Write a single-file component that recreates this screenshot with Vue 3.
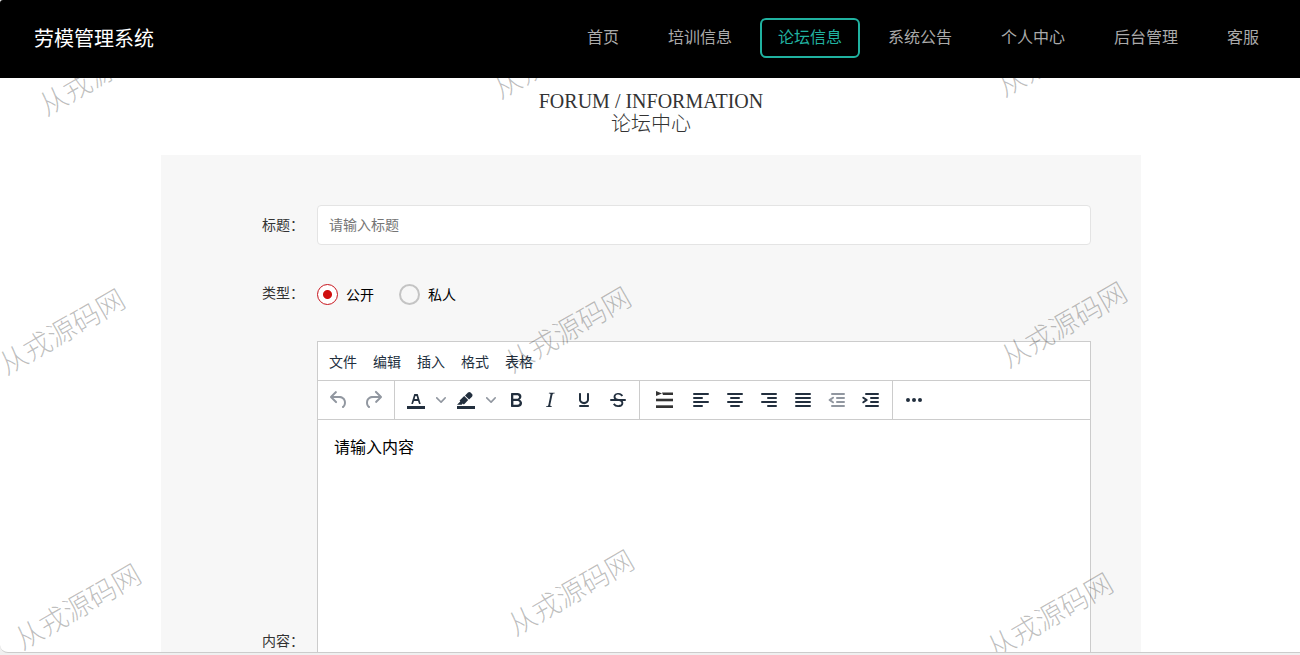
<script setup>
import { ref } from 'vue'

const navItems = ['首页', '培训信息', '论坛信息', '系统公告', '个人中心', '后台管理', '客服']
const active = ref('论坛信息')
const title = ref('')
const kind = ref('公开')
const content = ref('请输入内容')
const menus = ['文件', '编辑', '插入', '格式', '表格']

const bar = 'M3 18h18v3H3z'
const groups = [
  [
    { name: '撤销', muted: true, paths: ['M6.4 8H12c3.7 0 6.2 2 6.8 5.1.6 2.7-.4 5.6-2.3 6.8a1 1 0 01-1-1.8c1.1-.6 1.8-2.7 1.4-4.6-.5-2.1-2.1-3.5-4.9-3.5H6.4l3.3 3.3a1 1 0 11-1.4 1.4l-5-5a1 1 0 010-1.4l5-5a1 1 0 011.4 1.4L6.4 8z'] },
    { name: '重做', muted: true, paths: ['M17.6 10H12c-2.8 0-4.4 1.4-4.9 3.5-.4 2 .3 4 1.4 4.6a1 1 0 11-1 1.8c-2-1.2-2.9-4.1-2.3-6.8.6-3 3-5.1 6.8-5.1h5.6l-3.3-3.3a1 1 0 111.4-1.4l5 5a1 1 0 010 1.4l-5 5a1 1 0 01-1.4-1.4l3.3-3.3z'] }
  ],
  [
    { name: '文字颜色', split: true, paths: [bar, 'M8.7 16h-.8a.5.5 0 01-.5-.6l2.7-9c.1-.3.3-.4.5-.4h2.8c.2 0 .4.1.5.4l2.7 9a.5.5 0 01-.5.6h-.8a.5.5 0 01-.4-.4l-.7-2.2c0-.3-.3-.4-.5-.4h-3.4c-.2 0-.4.1-.5.4l-.7 2.2c0 .3-.2.4-.4.4zm2.6-7.6l-.6 2a.5.5 0 00.5.6h1.6a.5.5 0 00.5-.6l-.6-2c0-.3-.3-.4-.5-.4h-.4c-.2 0-.4.1-.5.4z'] },
    { name: '背景颜色', split: true, paths: [bar, 'M7.7 16.7H3l3.3-3.3-.7-.8L10.2 8l4 4.1-4 4.2c-.2.2-.6.2-.8 0l-.6-.7-1.1 1.1zm5-7.5L11 7.4l3-2.9a2 2 0 012.6 0L18 6c.7.7.7 2 0 2.7l-2.9 2.9-1.8-1.8-.5-.6z'] },
    { name: '粗体', paths: ['M7.8 19c-.3 0-.5 0-.6-.2l-.2-.5V5.7c0-.2 0-.4.2-.5l.6-.2h5c1.5 0 2.7.3 3.5 1 .7.6 1.1 1.4 1.1 2.5a3 3 0 01-.6 1.9c-.4.6-1 1-1.6 1.2.4.1.9.3 1.3.6s.8.7 1 1.2c.4.4.5 1 .5 1.6 0 1.3-.4 2.3-1.3 3-.8.7-2.1 1-3.8 1H7.8zm5-8.3c.6 0 1.2-.1 1.6-.5.4-.3.6-.7.6-1.3 0-1.1-.8-1.7-2.3-1.7H9.3v3.5h3.4zm.5 6c.7 0 1.3-.1 1.7-.4.4-.4.6-.9.6-1.5s-.2-1-.7-1.4c-.4-.3-1-.4-2-.4H9.4v3.8h4z'] },
    { name: '斜体', paths: ['M16.7 4.7l-.1.9h-.3c-.6 0-1 0-1.4.3-.3.3-.4.6-.5 1.1l-2.1 9.8v.6c0 .5.4.8 1.4.8h.2l-.2.8H8l.2-.8h.2c1.1 0 1.8-.5 2-1.5l2-9.8.1-.5c0-.6-.4-.8-1.4-.8h-.3l.2-.9h5.8z'] },
    { name: '下划线', paths: ['M16 5c.6 0 1 .4 1 1v5.5a4 4 0 01-.4 1.8l-1 1.4a5.3 5.3 0 01-5.5 1 5 5 0 01-1.6-1c-.5-.4-.8-.9-1.1-1.4a4 4 0 01-.4-1.8V6c0-.6.4-1 1-1s1 .4 1 1v5.5c0 .3 0 .6.2 1l.6.7a3.3 3.3 0 002.2.8 3.4 3.4 0 002.2-.8c.3-.2.4-.5.6-.8l.2-.9V6c0-.6.4-1 1-1zM8 17h8c.6 0 1 .4 1 1s-.4 1-1 1H8a1 1 0 010-2z'] },
    { name: '删除线', paths: ['M15.6 8.5c-.5-.7-1-1.1-1.3-1.3-.6-.4-1.3-.6-2-.6-2.7 0-2.8 1.7-2.8 2.1 0 1.6 1.8 2 3.2 2.3 4.4.9 4.6 2.8 4.6 3.9 0 1.4-.7 4.1-5 4.1A6.2 6.2 0 017 16.4l1.5-1.1c.4.6 1.6 2 3.7 2 1.6 0 2.5-.4 3-1.2.4-.8.3-2-.8-2.6-.7-.4-1.6-.7-2.9-1-1-.2-3.9-.8-3.9-3.6C7.6 6 10.3 5 12.4 5c2.9 0 4.2 1.6 4.7 2.4l-1.5 1.1z', 'M5 11h14a1 1 0 010 2H5a1 1 0 010-2z'] }
  ],
  [
    { name: '行高', wide: true, dark: true, paths: ['M4 3l6 2.600L4 8z', 'M10 4.500h11v2.500H11z', 'M4 10.700h17v2.600H4z', 'M4 17.300h17v2.700H4z'] },
    { name: '左对齐', paths: ['M5 5h14a1 1 0 010 2H5a1 1 0 010-2zM5 9h8a1 1 0 010 2H5a1 1 0 010-2zM5 13h14a1 1 0 010 2H5a1 1 0 010-2zM5 17h8a1 1 0 010 2H5a1 1 0 010-2z'] },
    { name: '居中', paths: ['M5 5h14a1 1 0 010 2H5a1 1 0 010-2zM8 9h8a1 1 0 010 2H8a1 1 0 010-2zM5 13h14a1 1 0 010 2H5a1 1 0 010-2zM8 17h8a1 1 0 010 2H8a1 1 0 010-2z'] },
    { name: '右对齐', paths: ['M5 5h14a1 1 0 010 2H5a1 1 0 010-2zM11 9h8a1 1 0 010 2h-8a1 1 0 010-2zM5 13h14a1 1 0 010 2H5a1 1 0 010-2zM11 17h8a1 1 0 010 2h-8a1 1 0 010-2z'] },
    { name: '两端对齐', paths: ['M5 5h14a1 1 0 010 2H5a1 1 0 010-2zM5 9h14a1 1 0 010 2H5a1 1 0 010-2zM5 13h14a1 1 0 010 2H5a1 1 0 010-2zM5 17h14a1 1 0 010 2H5a1 1 0 010-2z'] },
    { name: '减少缩进', muted: true, paths: ['M7 5h12a1 1 0 010 2H7a1 1 0 010-2zM12 9h7a1 1 0 010 2h-7a1 1 0 010-2zM12 13h7a1 1 0 010 2h-7a1 1 0 010-2zM7 17h12a1 1 0 010 2H7a1 1 0 010-2z', 'M6.400 12l2.200 1.500a1 1 0 01-1.200 1.600l-3.400-2.300a1 1 0 010-1.600l3.400-2.300a1 1 0 011.200 1.600z'] },
    { name: '增加缩进', paths: ['M7 5h12a1 1 0 010 2H7a1 1 0 010-2zM12 9h7a1 1 0 010 2h-7a1 1 0 010-2zM12 13h7a1 1 0 010 2h-7a1 1 0 010-2zM7 17h12a1 1 0 010 2H7a1 1 0 010-2z', 'M5.900 12L3.700 10.500a1 1 0 011.200-1.600l3.400 2.300a1 1 0 010 1.600l-3.400 2.300a1 1 0 01-1.200-1.600z'] }
  ],
  [
    { name: '更多', paths: ['M6 10a2 2 0 100 4 2 2 0 000-4zM12 10a2 2 0 100 4 2 2 0 000-4zM18 10a2 2 0 100 4 2 2 0 000-4z'] }
  ]
]
const chevron = 'M8.7 2.2c.3-.3.8-.3 1 0 .4.4.4.9 0 1.2L5.7 7.8c-.3.3-.9.3-1.2 0L.2 3.400a.8.8 0 010-1.2c.3-.3.8-.3 1.1 0L5 6l3.7-3.8z'

const marks = [
  [101, 71], [555, 54], [1059, 52],
  [61, 330], [567, 328], [1063, 323],
  [77, 605], [570, 591], [1049, 614]
]
</script>

<template>
  <div class="window">
    <header class="topbar">
      <a class="brand" href="#">劳模管理系统</a>
      <nav class="nav">
        <a
          v-for="item in navItems"
          :key="item"
          href="#"
          :class="{ active: item === active }"
          @click.prevent="active = item"
        >{{ item }}</a>
      </nav>
    </header>

    <main class="page">
      <h1 class="heading">
        <span>FORUM / INFORMATION</span>
        <span class="heading-cn">论坛中心</span>
      </h1>

      <form class="panel" @submit.prevent>
        <div class="row">
          <label class="label" for="title">标题：</label>
          <input id="title" v-model="title" class="text" type="text" placeholder="请输入标题">
        </div>

        <div class="row kind" role="radiogroup" aria-labelledby="kind-label">
          <span id="kind-label" class="label">类型：</span>
          <div class="radios">
            <label v-for="k in ['公开', '私人']" :key="k" class="radio">
              <input v-model="kind" type="radio" name="kind" :value="k">
              <span>{{ k }}</span>
            </label>
          </div>
        </div>

        <div class="row">
          <label class="label" for="content">内容：</label>
          <div class="editor">
            <div class="menubar">
              <button v-for="m in menus" :key="m" type="button">{{ m }}</button>
            </div>
            <div class="toolbar">
              <div v-for="(group, g) in groups" :key="g" class="group">
                <template v-for="tool in group" :key="tool.name">
                  <button
                    type="button"
                    class="tool"
                    :class="{ muted: tool.muted, wide: tool.wide, dark: tool.dark }"
                    :aria-label="tool.name"
                  >
                    <svg width="24" height="24" viewBox="0 0 24 24" fill-rule="evenodd">
                      <path v-for="p in tool.paths" :key="p" :d="p" />
                    </svg>
                  </button>
                  <button v-if="tool.split" type="button" class="tool caret" :aria-label="tool.name + '选项'">
                    <svg width="10" height="10" viewBox="0 0 10 10"><path :d="chevron" /></svg>
                  </button>
                </template>
              </div>
            </div>
            <textarea id="content" v-model="content" class="content"></textarea>
          </div>
        </div>
      </form>
    </main>

    <div class="marks" aria-hidden="true">
      <span
        v-for="([x, y], i) in marks"
        :key="i"
        class="mark"
        :style="{ left: x + 'px', top: y + 'px' }"
      >从戎源码网</span>
    </div>
  </div>
</template>

<style>
body {
  margin: 0;
  background: #f0f0f0;
}
</style>

<style scoped>
.window {
  position: relative;
  box-sizing: border-box;
  height: calc(100vh - 2px);
  overflow: hidden;
  background: #fff;
  border-bottom: 1px solid #ccc;
  border-radius: 3px 0 0 8px;
  font-family: "Noto Sans CJK SC", sans-serif;
  font-size: 14px;
  color: #333;
}

button,
input,
textarea {
  font: inherit;
}

.topbar {
  position: relative;
  z-index: 2;
  display: flex;
  align-items: center;
  justify-content: space-between;
  box-sizing: border-box;
  height: 78px;
  padding: 0 23px 2px 34px;
  background: #000;
}

.brand {
  padding-bottom: 2px;
  color: #fff;
  font-size: 20px;
  text-decoration: none;
}

.nav {
  display: flex;
  gap: 13px;
}

.nav a {
  padding: 0 16px 4px;
  border: 2px solid transparent;
  border-radius: 6px;
  color: #aaa;
  font-size: 16px;
  line-height: 32px;
  text-decoration: none;
}

.nav .active {
  margin: 0 -3px;
  border-color: #20b2a0;
  color: #20b2a0;
}

.page {
  padding: 12px 0 0 2px;
}

.heading {
  display: flex;
  flex-direction: column;
  margin: 0 0 19px;
  font-family: "Liberation Serif", "Noto Sans CJK SC", serif;
  font-size: 20px;
  font-weight: 400;
  line-height: 23px;
  text-align: center;
}

.heading-cn {
  font-weight: 300;
}

.panel {
  display: flex;
  flex-direction: column;
  gap: 32px;
  box-sizing: border-box;
  max-width: 980px;
  margin: 0 auto;
  padding: 50px 50px 50px 101px;
  background: #f7f7f7;
}

.row {
  display: grid;
  grid-template-columns: 55px 1fr;
  align-items: center;
}

.label {
  padding-bottom: 2px;
}

.text {
  box-sizing: border-box;
  width: 100%;
  height: 40px;
  padding: 0 11px 2px;
  border: 1px solid #e4e4e4;
  border-radius: 4px;
  background: #fff;
  outline: none;
}

.text::placeholder {
  color: #757575;
}

.kind {
  height: 32px;
}

.radios {
  display: flex;
  gap: 25px;
  padding-top: 2px;
  color: #000;
}

.radio {
  display: flex;
  align-items: center;
  gap: 8px;
}

.radio input {
  box-sizing: border-box;
  width: 21px;
  height: 21px;
  margin: 0;
  appearance: none;
  border: 2px solid #c4c4c4;
  border-radius: 50%;
}

.radio input:checked {
  border: 1px solid #c8141c;
  background: radial-gradient(circle, #d01010 4px, #fff 5px);
}

.editor {
  display: flex;
  flex-direction: column;
  box-sizing: border-box;
  height: 600px;
  border: 1px solid #ccc;
  background: #fff;
}

.menubar {
  display: flex;
  align-items: center;
  height: 38px;
  padding: 0 3px;
}

.menubar button {
  padding: 0 8px;
  border: 0;
  background: none;
  color: #222f3e;
  line-height: 34px;
}

.toolbar {
  display: flex;
  height: 38px;
  border-top: 1px solid #ccc;
  border-bottom: 1px solid #ccc;
}

.group {
  display: flex;
  align-items: center;
  padding: 0 4px;
  border-right: 1px solid #ccc;
}

.group:last-child {
  border-right: 0;
}

.tool {
  display: grid;
  place-items: center;
  width: 34px;
  height: 34px;
  padding: 0;
  border: 0;
  background: none;
  fill: #222f3e;
}

.tool.wide {
  width: 40px;
}

.tool.dark {
  fill: #333;
}

.tool.muted,
.tool.caret {
  fill: #9197a0;
}

.tool.caret {
  width: 16px;
}

.content {
  flex: 1;
  padding: 14px 16px;
  border: 0;
  outline: none;
  resize: none;
  background: none;
  color: #000;
  font-size: 16px;
  line-height: 24px;
}

.marks {
  position: absolute;
  inset: 0;
  z-index: 1;
  pointer-events: none;
}

.mark {
  position: absolute;
  translate: -50% -50%;
  rotate: -30deg;
  color: rgba(0, 0, 0, 0.26);
  font-size: 28px;
  font-weight: 300;
  line-height: 32px;
  white-space: nowrap;
}
</style>
